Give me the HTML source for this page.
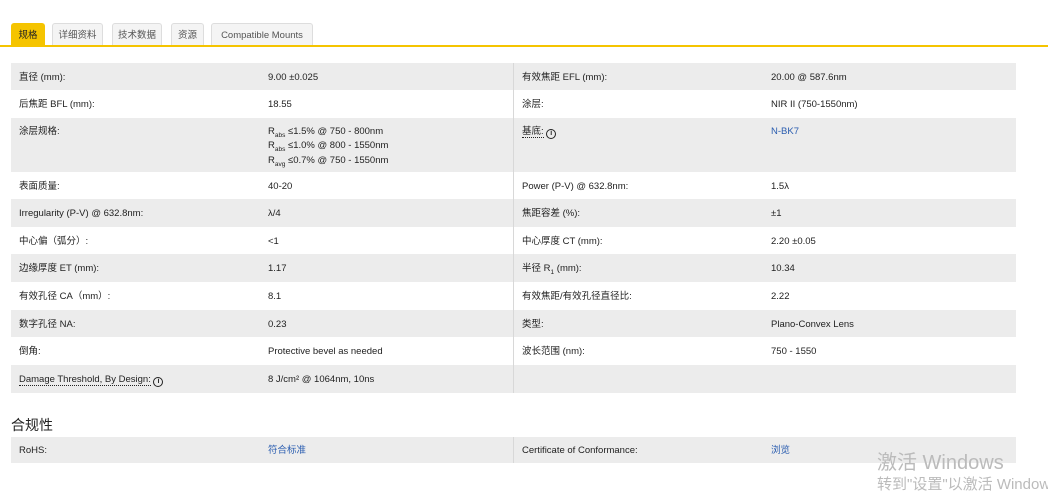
<!DOCTYPE html>
<html><head><meta charset="utf-8"><style>
*{margin:0;padding:0;box-sizing:border-box}
body{width:1048px;height:494px;background:#fff;font-family:"Liberation Sans","Noto Sans CJK SC",sans-serif;font-size:9.5px;color:#222;position:relative;overflow:hidden}
.tab{position:absolute;top:23px;height:23px;border:1px solid #ddd;border-bottom:none;background:#f4f4f4;border-radius:3px 3px 0 0;color:#555;font-size:9.5px;line-height:23px;text-align:center}
.tab.on{background:#f5c400;border-color:#f5c400;color:#222}
.line{position:absolute;top:45px;left:0;width:1048px;height:2px;background:#f5c400}
.row{position:absolute;left:11px;width:1005px}
.g{background:#ececec}
.row span{position:absolute;top:1px}
.a{left:8px}.b{left:257px}.c{left:511px}.d{left:760px}
.div{position:absolute;left:513px;top:63px;width:1px;height:330px;background:#d8d8d8}
.div2{position:absolute;left:513px;top:437px;width:1px;height:26px;background:#d8d8d8}
.lk{color:#2a5db0}
.u{border-bottom:1px dotted #222}
.i{display:inline-block;width:10px;height:10px;border:1.5px solid #222;border-radius:50%;font-size:7px;line-height:7px;text-align:center;font-weight:bold;vertical-align:-1px}
sub{font-size:6.5px}
h3{position:absolute;left:11px;top:415px;font-size:14px;font-weight:normal;color:#222}
.wm{position:absolute;left:877px;color:#bbb;white-space:nowrap}
</style></head><body>
<div class="tab on" style="left:11px;width:34px">规格</div>
<div class="tab" style="left:52px;width:51px">详细资料</div>
<div class="tab" style="left:112px;width:50px">技术数据</div>
<div class="tab" style="left:171px;width:33px">资源</div>
<div class="tab" style="left:211px;width:102px">Compatible Mounts</div>
<div class="line"></div>

<div class="row g" style="top:63px;height:27px;line-height:27px"><span class="a">直径 (mm):</span><span class="b">9.00 ±0.025</span><span class="c">有效焦距 EFL (mm):</span><span class="d">20.00 @ 587.6nm</span></div>
<div class="row" style="top:90px;height:28px;line-height:28px"><span class="a">后焦距 BFL (mm):</span><span class="b">18.55</span><span class="c">涂层:</span><span class="d">NIR II (750-1550nm)</span></div>
<div class="row g" style="top:118px;height:54px;line-height:10.5px"><span class="a" style="top:9px">涂层规格:</span><span class="b" style="top:9px">R<sub>abs</sub> ≤1.5% @ 750 - 800nm<br>R<sub>abs</sub> ≤1.0% @ 800 - 1550nm<br>R<sub>avg</sub> ≤0.7% @ 750 - 1550nm</span><span class="c" style="top:9px"><span class="u" style="position:static">基底:</span> <span class="i" style="position:static">i</span></span><span class="d lk" style="top:9px">N-BK7</span></div>
<div class="row" style="top:172px;height:27px;line-height:27px"><span class="a">表面质量:</span><span class="b">40-20</span><span class="c">Power (P-V) @ 632.8nm:</span><span class="d">1.5λ</span></div>
<div class="row g" style="top:199px;height:28px;line-height:28px"><span class="a">Irregularity (P-V) @ 632.8nm:</span><span class="b">λ/4</span><span class="c">焦距容差 (%):</span><span class="d">±1</span></div>
<div class="row" style="top:227px;height:27px;line-height:27px"><span class="a">中心偏（弧分）:</span><span class="b">&lt;1</span><span class="c">中心厚度 CT (mm):</span><span class="d">2.20 ±0.05</span></div>
<div class="row g" style="top:254px;height:28px;line-height:28px"><span class="a">边缘厚度 ET (mm):</span><span class="b">1.17</span><span class="c">半径 R<sub>1</sub> (mm):</span><span class="d">10.34</span></div>
<div class="row" style="top:282px;height:28px;line-height:28px"><span class="a">有效孔径 CA（mm）:</span><span class="b">8.1</span><span class="c">有效焦距/有效孔径直径比:</span><span class="d">2.22</span></div>
<div class="row g" style="top:310px;height:27px;line-height:27px"><span class="a">数字孔径 NA:</span><span class="b">0.23</span><span class="c">类型:</span><span class="d">Plano-Convex Lens</span></div>
<div class="row" style="top:337px;height:28px;line-height:28px"><span class="a">倒角:</span><span class="b">Protective bevel as needed</span><span class="c">波长范围 (nm):</span><span class="d">750 - 1550</span></div>
<div class="row g" style="top:365px;height:28px;line-height:28px"><span class="a"><span class="u" style="position:static">Damage Threshold, By Design:</span> <span class="i" style="position:static">i</span></span><span class="b">8 J/cm² @ 1064nm, 10ns</span></div>
<div class="div"></div>

<h3>合规性</h3>
<div class="row g" style="top:437px;height:26px;line-height:26px"><span class="a">RoHS:</span><span class="b lk">符合标准</span><span class="c">Certificate of Conformance:</span><span class="d lk">浏览</span></div>
<div class="div2"></div>
<div class="wm" style="top:446px;font-size:20px">激活 Windows</div>
<div class="wm" style="top:473px;font-size:15px">转到"设置"以激活 Windows</div>
</body></html>
